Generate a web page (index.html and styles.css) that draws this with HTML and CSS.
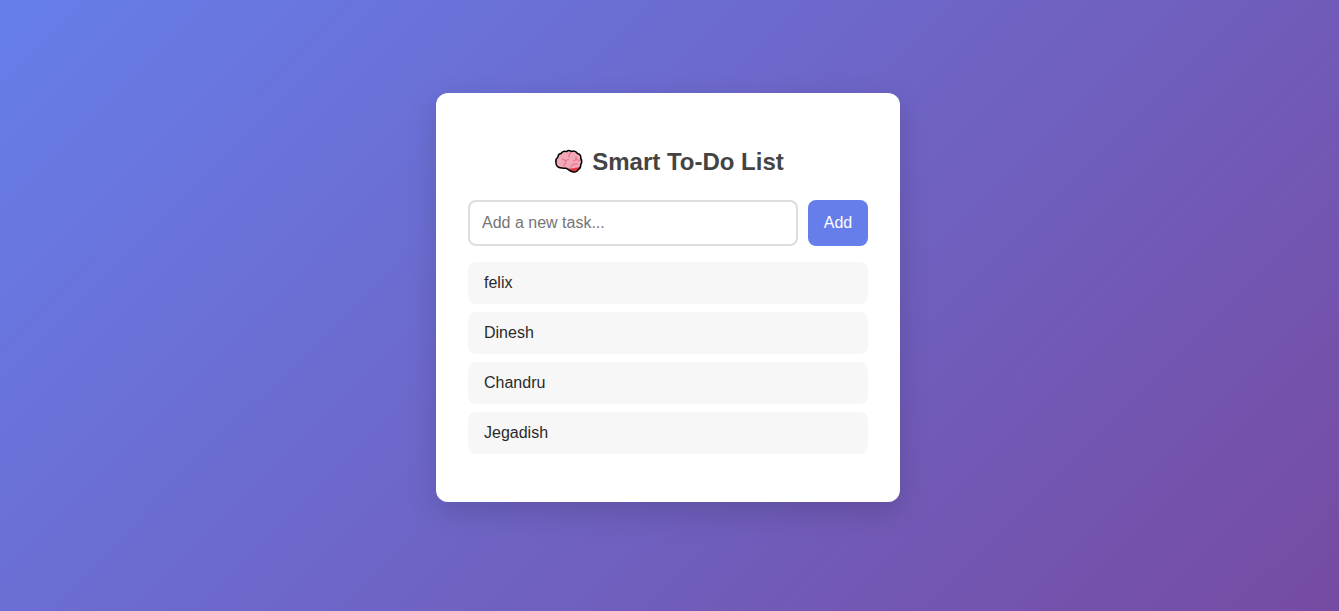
FILE: index.html
```html
<!DOCTYPE html>
<html lang="en">
<head>
<meta charset="utf-8">
<meta name="viewport" content="width=device-width, initial-scale=1">
<title>Smart To-Do List</title>
<link rel="stylesheet" href="styles.css">
</head>
<body>
<main class="card">
  <h1 class="title">
    <svg class="brain" viewBox="0 0 34 28" aria-hidden="true">
      <path d="M9 5.500C10 3.800 12.500 3 14.500 3.600C16 2.400 18 2.600 19 3.500C21 2.800 24 3.200 25.500 5.500C28 6 29 8.500 28.800 10.500C30 12.500 29.800 15 28.800 16.500C28.800 19 27.500 21 26.200 21.600C25.200 23.800 22.500 24.600 20.500 23.800C18 23.400 16.500 21.200 14 20.200C12 20.600 10.500 20 9.500 19.900C6 19.800 4 17.500 3.900 14.500C3.500 12 4.500 10 6 9C6 7 7.500 5.700 9 5.500Z" fill="#f4a9b8"/>
      <path d="M15.500 20.600C18 21 19.500 19.800 21.500 20.400C24 19.400 26 20 28 18.800C27.600 20.500 27 21.200 26.200 21.600C25.200 23.800 22.500 24.600 20.500 23.800C18.500 23.400 17 21.600 15.500 20.600Z" fill="#e0324b"/>
      <path d="M10.500 11L13.500 12.500L16.500 11.500M13.500 12.500V15.500L11.500 17.500M18.500 5L17 7V9M24 9V11.500L21.500 13M24 11.500L27.500 12.500M19 19C20 16.500 22.500 15.500 25.500 16" fill="none" stroke="#e8788c" stroke-width="1.200" stroke-linecap="round"/>
      <path d="M9 5.500C10 3.800 12.500 3 14.500 3.600C16 2.400 18 2.600 19 3.500C21 2.800 24 3.200 25.500 5.500C28 6 29 8.500 28.800 10.500C30 12.500 29.800 15 28.800 16.500C28.800 19 27.500 21 26.200 21.600C25.200 23.800 22.500 24.600 20.500 23.800C18 23.400 16.500 21.200 14 20.200C12 20.600 10.500 20 9.500 19.900C6 19.800 4 17.500 3.900 14.500C3.500 12 4.500 10 6 9C6 7 7.500 5.700 9 5.500Z" fill="none" stroke="#000" stroke-width="1.500" stroke-linejoin="round"/>
    </svg>
    <span>Smart To-Do List</span>
  </h1>
  <form class="entry">
    <input class="entry-input" type="text" placeholder="Add a new task..." aria-label="New task">
    <button class="entry-button" type="button">Add</button>
  </form>
  <ul class="tasks">
    <li class="task">felix</li>
    <li class="task">Dinesh</li>
    <li class="task">Chandru</li>
    <li class="task">Jegadish</li>
  </ul>
</main>
</body>
</html>
```
FILE: styles.css
```css
* {
  box-sizing: border-box;
}

body {
  margin: 0;
  min-height: 100vh;
  padding: 0 3px 16px 0;
  display: flex;
  align-items: center;
  justify-content: center;
  background: linear-gradient(135deg, #667eea, #764ba2);
  font-family: "Liberation Sans", Arial, sans-serif;
  font-size: 16px;
  color: #2a2a2a;
}

.card {
  width: 100%;
  max-width: 464px;
  padding: 52px 32px 48px;
  background: #fff;
  border-radius: 12px;
  box-shadow: 0 10px 30px rgba(0, 0, 0, 0.15);
}

.title {
  margin: 0 0 22px;
  display: flex;
  align-items: center;
  justify-content: center;
  gap: 6px;
  font-size: 24px;
  line-height: 33px;
  color: #444;
}

.brain {
  width: 34px;
  height: 28px;
}

.entry {
  display: flex;
  gap: 10px;
  margin-bottom: 16px;
}

.entry-input {
  flex: 1;
  min-width: 0;
  padding: 12px;
  border: 2px solid #ddd;
  border-radius: 8px;
  font: inherit;
  line-height: 18px;
  background: #fff;
}

.entry-input::placeholder {
  color: #757575;
}

.entry-button {
  width: 60px;
  padding: 0;
  border: none;
  border-radius: 8px;
  background: #667eea;
  color: #fff;
  font: inherit;
}

.tasks {
  margin: 0;
  padding: 0;
  list-style: none;
  display: grid;
  gap: 8px;
}

.task {
  padding: 12px 16px;
  border-radius: 8px;
  background: #f7f7f7;
  line-height: 18px;
}
```
